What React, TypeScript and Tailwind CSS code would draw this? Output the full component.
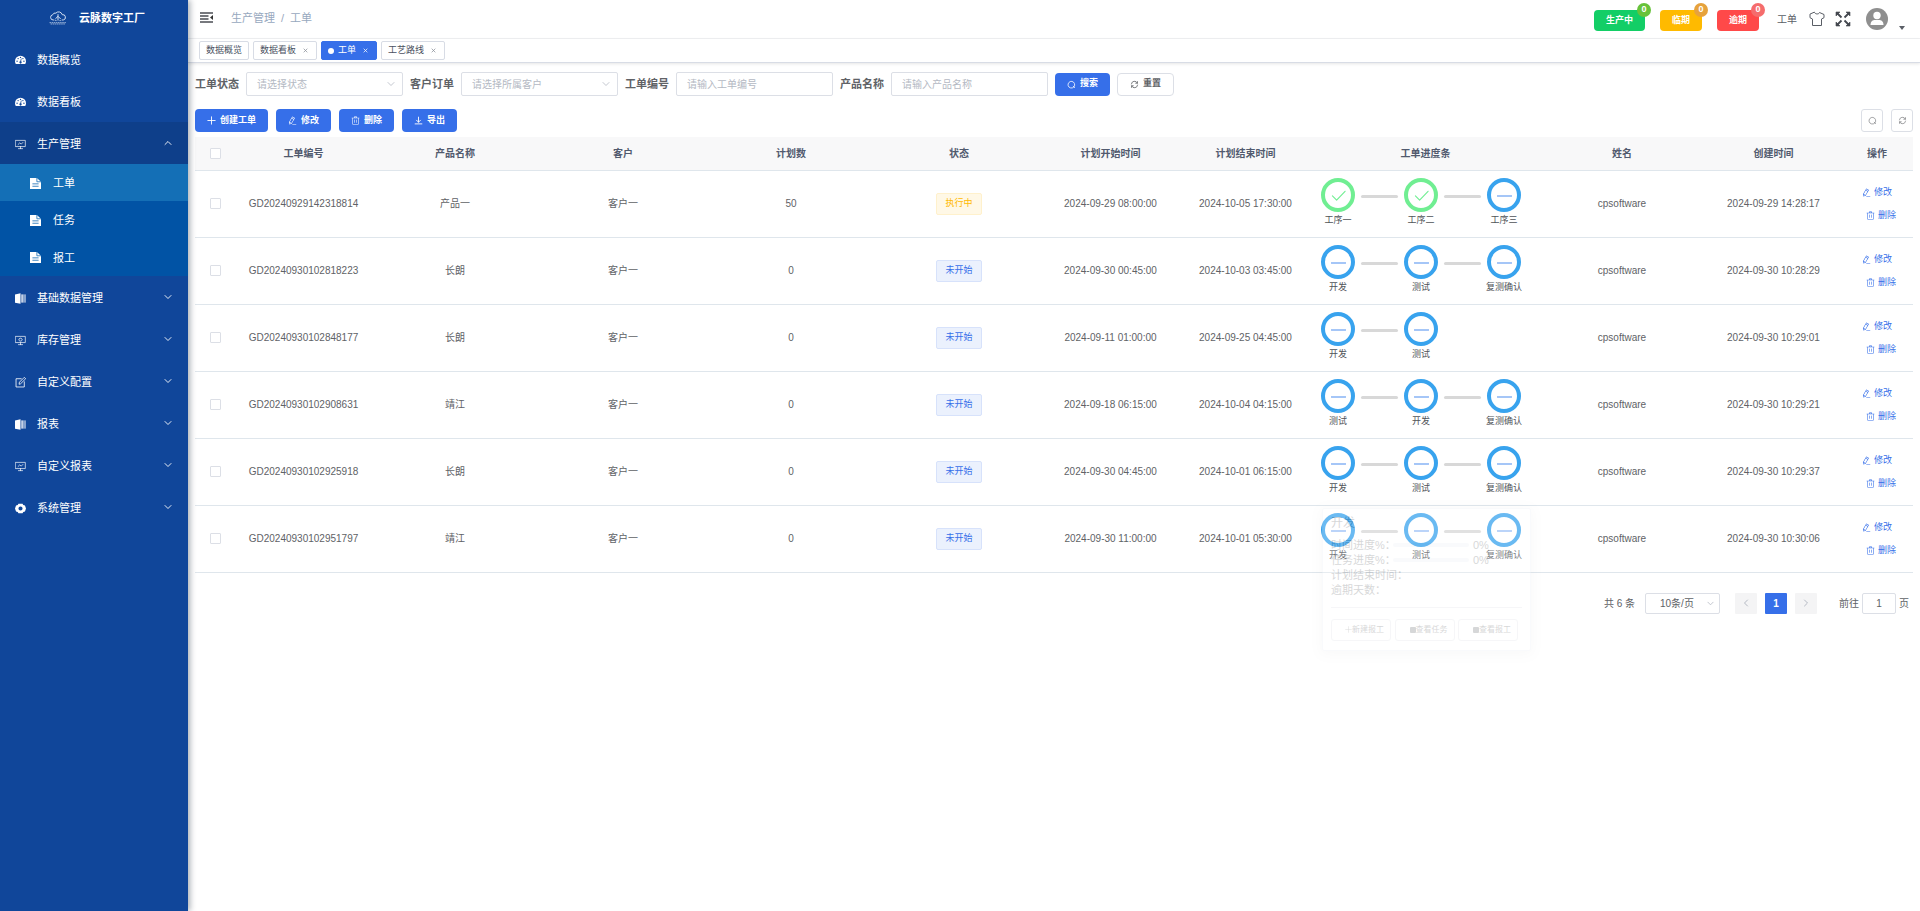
import type { ReactNode } from "react";
import clsx from "clsx";

type IconProps = { className?: string };

function Glyph({ className, d }: IconProps & { d: string }) {
  return (
    <svg viewBox="0 0 1024 1024" fill="currentColor" className={clsx("shrink-0", className)} aria-hidden="true">
      <path d={d} />
    </svg>
  );
}

function Line({ className, d, width = 1 }: IconProps & { d: string; width?: number }) {
  return (
    <svg
      viewBox="0 0 16 16"
      fill="none"
      stroke="currentColor"
      strokeWidth={width}
      strokeLinecap="round"
      strokeLinejoin="round"
      className={clsx("shrink-0", className)}
      aria-hidden="true"
    >
      <path d={d} />
    </svg>
  );
}

const EDIT =
  "m199.04 672.64 193.984 112 224-387.968-193.92-112-224 388.032zm-23.872 60.16 32.896 148.288 144.896-45.696zM455.04 229.248l193.92 112 56.704-98.112-193.984-112zM104.32 708.8l384-665.024 304.768 175.936L409.152 884.8h.064l-248.448 78.336zm384 254.272v-64h448v64z";
const TRASH =
  "M160 256H96a32 32 0 0 1 0-64h256V95.936a32 32 0 0 1 32-32h256a32 32 0 0 1 32 32V192h256a32 32 0 1 1 0 64h-64v672a32 32 0 0 1-32 32H192a32 32 0 0 1-32-32zm448-64v-64H416v64zM224 896h576V256H224zm192-128a32 32 0 0 1-32-32V416a32 32 0 0 1 64 0v320a32 32 0 0 1-32 32m192 0a32 32 0 0 1-32-32V416a32 32 0 0 1 64 0v320a32 32 0 0 1-32 32";
const SEARCH = "M11.5 13.2A6 6 0 1 1 13 11.5M11 11l2.5 2.5";
const REFRESH = "M2.5 7A5.5 5.5 0 0 1 13 5.5M13.2 2.8V5.8H10.2M13.5 9A5.5 5.5 0 0 1 3 10.5M2.8 13.2V10.2H5.8";
const PLUS = "M8 1.5v13M1.5 8h13";
const DOWNLOAD = "M8 2v9M4.5 7.5 8 11l3.5-3.5M2 14h12";
const DOWN = "m2 5 6 6 6-6";
const UP = "m2 11 6-6 6 6";

function GaugeIcon() {
  return (
    <svg viewBox="0 0 16 14" className="w-[11px] shrink-0" aria-hidden="true">
      <path d="M8 1a8 8 0 0 0-8 8c0 1.600.4 3 1.200 4h13.600c.8-1 1.200-2.400 1.200-4a8 8 0 0 0-8-8z" fill="#fff" />
      <g fill="#10469a">
        <circle cx="3" cy="9" r="1" />
        <circle cx="4.500" cy="5.200" r="1" />
        <circle cx="8" cy="3.500" r="1" />
        <circle cx="11.500" cy="5.200" r="1" />
        <circle cx="13" cy="9" r="1" />
        <path d="m8.600 5 1 .2-.7 4a1.700 1.700 0 1 1-1.200-.2z" />
      </g>
    </svg>
  );
}

function BoardIcon() {
  return <Line className="w-[11px]" d="M1 2h14v9H1zM8 11v3M5 14h6M4.500 8 7 5.500l2 2L11.500 5" />;
}

function StockIcon() {
  return <Line className="w-[11px]" d="M1 2h14v9H1zM8 11v3M5 14h6M5.500 7a2.500 2.500 0 0 1 4.500-1.500M10.500 6.500A2.500 2.500 0 0 1 6 8" />;
}

function BookIcon() {
  return (
    <svg viewBox="0 0 16 16" className="w-[11px] shrink-0" aria-hidden="true">
      <path d="M0 2 8 .5v15L0 14z" fill="#fff" />
      <path d="M9 2h3v12H9z" fill="#fff" opacity=".75" />
      <path d="M12 2h4v12h-4z" fill="#fff" opacity=".5" />
    </svg>
  );
}

function NoteIcon() {
  return <Line className="w-[11px]" d="M9 2.500H1.500v12h12V7M6 10l.5-2.500 7-7 2 2-7 7z" width={1.2} />;
}

function GearIcon() {
  return (
    <svg viewBox="0 0 16 16" className="w-[11px] shrink-0" aria-hidden="true">
      <path
        fill="#fff"
        fillRule="evenodd"
        d="M5 1h6l1 2 2.500.5L16 8l-1.500 4.500L12 13l-1 2H5l-1-2-2.500-.5L0 8l1.500-4.500L4 3zm3 4a3 3 0 1 0 0 6 3 3 0 0 0 0-6z"
      />
    </svg>
  );
}

function DocIcon() {
  return (
    <svg viewBox="0 0 16 16" className="w-[11px] shrink-0" aria-hidden="true">
      <path d="M0 0h10l6 5.500V16H0z" fill="#fff" />
      <path d="M10 0v5.500h6M3.500 8.500h9M3.500 12h9" stroke="#1a6fb5" strokeWidth="1.200" fill="none" />
    </svg>
  );
}

function CloudLogo() {
  return (
    <svg viewBox="0 0 34 26" className="w-[18px] shrink-0" fill="none" stroke="#dbe6f6" strokeWidth="1.800" aria-hidden="true">
      <path d="M10 17H8a5 5 0 0 1-1-9.900 5 5 0 0 1 6-3.100 7 7 0 0 1 12 3 5 5 0 0 1 2 10h-3" />
      <path d="M17 6v12M17 10l-5 5M17 10l5 5M13 17v2M21 17v2" />
      <path d="M1 22h32M3 24.500h28" strokeDasharray="3 1" opacity=".7" />
    </svg>
  );
}

function MenuItem({ icon, label, state }: { icon: ReactNode; label: string; state?: "open" | "closed" }) {
  return (
    <a
      href="#"
      className={clsx("flex h-[42px] items-center pt-[2px] pr-4 pl-[15px] text-white", state === "open" && "bg-[#0e3f8a]")}
    >
      <span className="flex w-[22px] items-center">{icon}</span>
      <span className="flex-1">{label}</span>
      {state && <Line className="mb-[2px] w-2" d={state === "open" ? UP : DOWN} width={1.8} />}
    </a>
  );
}

function Sidebar() {
  return (
    <aside className="z-10 w-[188px] shrink-0 bg-[#10469a] text-[11px] shadow-[2px_0_6px_rgba(0,21,41,0.35)]">
      <div className="flex h-[38px] items-center gap-3 pb-[2px] pl-[49px] font-bold text-white">
        <CloudLogo />
        <h1>云脉数字工厂</h1>
      </div>
      <nav>
        <MenuItem icon={<GaugeIcon />} label="数据概览" />
        <MenuItem icon={<GaugeIcon />} label="数据看板" />
        <MenuItem icon={<BoardIcon />} label="生产管理" state="open" />
        <div className="grid h-[112px] grid-rows-3 bg-[#0153a5] text-white">
          {["工单", "任务", "报工"].map((label, i) => (
            <a key={label} href="#" className={clsx("flex items-center gap-3 pt-px pl-[30px]", i === 0 && "bg-[#146fb6]")}>
              <DocIcon />
              {label}
            </a>
          ))}
        </div>
        <MenuItem icon={<BookIcon />} label="基础数据管理" state="closed" />
        <MenuItem icon={<StockIcon />} label="库存管理" state="closed" />
        <MenuItem icon={<NoteIcon />} label="自定义配置" state="closed" />
        <MenuItem icon={<BookIcon />} label="报表" state="closed" />
        <MenuItem icon={<BoardIcon />} label="自定义报表" state="closed" />
        <MenuItem icon={<GearIcon />} label="系统管理" state="closed" />
      </nav>
    </aside>
  );
}

function CountButton({ label, color, dot }: { label: string; color: string; dot: string }) {
  return (
    <button type="button" className={clsx("relative h-[21px] rounded px-3 text-[9px] font-bold text-white", color)}>
      {label}
      <span
        className={clsx(
          "absolute -top-[7px] -right-[6px] flex size-[14px] items-center justify-center rounded-full text-[9px] font-bold",
          dot,
        )}
      >
        0
      </span>
    </button>
  );
}

function Navbar() {
  return (
    <header className="flex h-[39px] items-center border-b border-[#f0f1f3] pr-[15px] pl-3 text-[#5a5e66]">
      <button type="button" aria-label="收起菜单" className="mb-[3px]">
        <svg viewBox="0 0 13 11" className="w-[13px]" aria-hidden="true">
          <path d="M0 1h13M0 4h8.500M0 7h8.500M0 10h13" stroke="#4b4e54" strokeWidth="1.400" />
          <path d="M13 3v5l-3-2.500z" fill="#333" />
        </svg>
      </button>
      <nav className="mb-px ml-[18px] flex gap-[6px] text-[11px] text-[#97a8be]">
        <a href="#">生产管理</a>
        <span>/</span>
        <a href="#">工单</a>
      </nav>
      <div className="ml-auto flex items-center">
        <div className="mt-[3px] flex gap-[15px]">
          <CountButton label="生产中" color="bg-[#13ce66]" dot="bg-[#67c23a]" />
          <CountButton label="临期" color="bg-[#ffba00]" dot="bg-[#e6a23c]" />
          <CountButton label="逾期" color="bg-[#ff4949]" dot="bg-[#f56c6c]" />
        </div>
        <a href="#" className="ml-[18px] text-[10px]">
          工单
        </a>
        <button type="button" aria-label="布局大小" className="ml-3">
          <Line
            className="w-4"
            d="M5.500 1.500C6 3.500 10 3.500 10.500 1.500L15 3.500v3.200L12.500 8v6.500h-9V8L1 6.700V3.500z"
          />
        </button>
        <button type="button" aria-label="全屏" className="ml-[10px]">
          <svg viewBox="0 0 16 16" className="w-4" fill="#44484f" stroke="#44484f" strokeWidth="1.800" aria-hidden="true">
            <path d="M1 5V1h4zM11 1h4v4zM1 11v4h4zM15 11v4h-4z" strokeWidth=".6" />
            <path d="m2 2 4.500 4.500M14 2 9.500 6.500M2 14l4.500-4.500M14 14 9.500 9.500" />
          </svg>
        </button>
        <button type="button" aria-label="用户" className="ml-[15px] flex items-end gap-[11px]">
          <svg viewBox="0 0 22 22" className="w-[22px]" aria-hidden="true">
            <circle cx="11" cy="11" r="11" fill="#8f8f8f" />
            <circle cx="11" cy="7.500" r="3.700" fill="#fff" />
            <path d="M4.500 17c0-4 2.500-5 4.500-5h4c2 0 4.500 1 4.500 5z" fill="#fff" />
          </svg>
          <svg viewBox="0 0 6 4" className="w-[6px]" aria-hidden="true">
            <path d="M0 0h6L3 4z" fill="#5a5e66" />
          </svg>
        </button>
      </div>
    </header>
  );
}

const TABS = [
  { label: "数据概览", closable: false },
  { label: "数据看板", closable: true },
  { label: "工单", closable: true, active: true },
  { label: "工艺路线", closable: true },
];

function TabsBar() {
  return (
    <div className="flex h-6 items-center gap-1 border-b border-[#d8dce5] pl-[11px] shadow-[0_1px_3px_rgba(0,0,0,0.1)]">
      {TABS.map((tab) => (
        <a
          key={tab.label}
          href="#"
          className={clsx(
            "flex h-[19px] items-center rounded-xs border px-[6px] text-[9px]",
            tab.active ? "border-[#366fe9] bg-[#366fe9] text-white" : "border-[#d8dce5] bg-white text-[#495060]",
          )}
        >
          {tab.active && <span className="mr-1 size-[6px] rounded-full bg-white" />}
          {tab.label}
          {tab.closable && (
            <Line className={clsx("mr-[2px] ml-[7px] w-[5px]", !tab.active && "text-[#8b909a]")} d="m3 3 10 10M13 3 3 13" width={2.4} />
          )}
        </a>
      ))}
    </div>
  );
}

const FIELD = "h-6 w-[157px] rounded-xs border border-[#dcdfe6] bg-white px-[10px] text-[10px] text-[#606266] placeholder:text-[#b4b9c3]";

function SelectField({ id, label, placeholder }: { id: string; label: string; placeholder: string }) {
  return (
    <div className="flex items-center gap-[7px]">
      <label htmlFor={id}>{label}</label>
      <div className="relative">
        <select id={id} className={clsx(FIELD, "block appearance-none font-normal text-[#b4b9c3]")}>
          <option>{placeholder}</option>
        </select>
        <Line className="pointer-events-none absolute top-2 right-2 w-2 text-[#b4b9c3]" d={DOWN} width={1.6} />
      </div>
    </div>
  );
}

function TextField({ id, label, placeholder }: { id: string; label: string; placeholder: string }) {
  return (
    <div className="flex items-center gap-[7px]">
      <label htmlFor={id}>{label}</label>
      <input id={id} type="text" placeholder={placeholder} className={clsx(FIELD, "font-normal")} />
    </div>
  );
}

const BUTTON = "flex h-[23px] items-center justify-center gap-1 rounded px-3 text-[9px] font-bold";
const PRIMARY = "bg-[#366fe9] text-white";

function Filters() {
  return (
    <form className="flex flex-wrap items-center gap-[7px] text-[11px] font-bold text-[#606266]">
      <SelectField id="status" label="工单状态" placeholder="请选择状态" />
      <SelectField id="customer" label="客户订单" placeholder="请选择所属客户" />
      <TextField id="code" label="工单编号" placeholder="请输入工单编号" />
      <TextField id="product" label="产品名称" placeholder="请输入产品名称" />
      <button type="button" className={clsx(BUTTON, PRIMARY)}>
        <Line className="w-[9px]" d={SEARCH} width={1.4} />
        搜索
      </button>
      <button type="button" className={clsx(BUTTON, "border border-[#dcdfe6] bg-white")}>
        <Line className="w-[9px]" d={REFRESH} width={1.4} />
        重置
      </button>
    </form>
  );
}

function Toolbar() {
  const tool = "flex h-[23px] w-[22px] items-center justify-center rounded-[3px] border border-[#dcdfe6] text-[#606266]";
  return (
    <div className="mt-[13px] flex gap-2">
      <button type="button" className={clsx(BUTTON, PRIMARY)}>
        <Line className="w-[9px]" d={PLUS} width={1.6} />
        创建工单
      </button>
      <button type="button" className={clsx(BUTTON, PRIMARY)}>
        <Glyph className="w-[9px]" d={EDIT} />
        修改
      </button>
      <button type="button" className={clsx(BUTTON, PRIMARY)}>
        <Glyph className="w-[9px]" d={TRASH} />
        删除
      </button>
      <button type="button" className={clsx(BUTTON, PRIMARY)}>
        <Line className="w-[9px]" d={DOWNLOAD} width={1.6} />
        导出
      </button>
      <button type="button" aria-label="显示搜索" className={clsx(tool, "ml-auto")}>
        <Line className="w-[9px]" d={SEARCH} />
      </button>
      <button type="button" aria-label="刷新" className={tool}>
        <Line className="w-[9px]" d={REFRESH} />
      </button>
    </div>
  );
}

type Step = { name: string; done?: boolean };
type Order = {
  code: string;
  product: string;
  count: number;
  running?: boolean;
  start: string;
  end: string;
  steps: Step[];
  created: string;
};

const DEV_FIRST: Step[] = [{ name: "开发" }, { name: "测试" }, { name: "复测确认" }];
const TEST_FIRST: Step[] = [{ name: "测试" }, { name: "开发" }, { name: "复测确认" }];

const ORDERS: Order[] = [
  {
    code: "GD20240929142318814",
    product: "产品一",
    count: 50,
    running: true,
    start: "2024-09-29 08:00:00",
    end: "2024-10-05 17:30:00",
    steps: [{ name: "工序一", done: true }, { name: "工序二", done: true }, { name: "工序三" }],
    created: "2024-09-29 14:28:17",
  },
  {
    code: "GD20240930102818223",
    product: "长朗",
    count: 0,
    start: "2024-09-30 00:45:00",
    end: "2024-10-03 03:45:00",
    steps: DEV_FIRST,
    created: "2024-09-30 10:28:29",
  },
  {
    code: "GD20240930102848177",
    product: "长朗",
    count: 0,
    start: "2024-09-11 01:00:00",
    end: "2024-09-25 04:45:00",
    steps: DEV_FIRST.slice(0, 2),
    created: "2024-09-30 10:29:01",
  },
  {
    code: "GD20240930102908631",
    product: "靖江",
    count: 0,
    start: "2024-09-18 06:15:00",
    end: "2024-10-04 04:15:00",
    steps: TEST_FIRST,
    created: "2024-09-30 10:29:21",
  },
  {
    code: "GD20240930102925918",
    product: "长朗",
    count: 0,
    start: "2024-09-30 04:45:00",
    end: "2024-10-01 06:15:00",
    steps: DEV_FIRST,
    created: "2024-09-30 10:29:37",
  },
  {
    code: "GD20240930102951797",
    product: "靖江",
    count: 0,
    start: "2024-09-30 11:00:00",
    end: "2024-10-01 05:30:00",
    steps: DEV_FIRST,
    created: "2024-09-30 10:30:06",
  },
];

function Steps({ steps }: { steps: Step[] }) {
  return (
    <ol className="flex pl-2">
      {steps.map((step, i) => (
        <li key={step.name} className="flex">
          {i > 0 && <span className="mx-[6px] mt-[17px] h-[3px] w-[37px] rounded-full bg-[#d8d8d8]" />}
          <span className="flex w-[34px] flex-col items-center">
            <span
              className={clsx(
                "flex size-[34px] items-center justify-center rounded-full border-4",
                step.done ? "border-[#70ee92] text-[#70ee92]" : "border-[#38a3ee] text-[#4c8df0]",
              )}
            >
              <Line className="w-[15px]" d={step.done ? "m1.500 8.500 4.500 4.500L15 3.500" : "M.5 8.500h15"} width={1.2} />
            </span>
            <span className="mt-[2px] text-[9px] leading-3 whitespace-nowrap text-[#505358]">{step.name}</span>
          </span>
        </li>
      ))}
    </ol>
  );
}

// Shown half way through its fade, under the first step of the last order.
function StepPopover() {
  const action = "flex h-[22px] w-[60px] items-center justify-end rounded-[3px] border border-[#dcdfe6] pr-[6px] text-[8px]";
  return (
    <div className="absolute top-[2px] left-[9px] z-10 h-[143px] w-[209px] rounded-xs border border-[#ebeef5] bg-white px-2 text-left text-[11px] text-[#606266] opacity-25 shadow-[0_2px_12px_rgba(0,0,0,0.1)]">
      <h2 className="mt-[6px] mb-[7px] text-[12px] leading-4">开发</h2>
      {["时间进度%：", "任务进度%："].map((label) => (
        <div key={label} className="flex h-[15px] items-center">
          <span className="w-[62px] whitespace-nowrap">{label}</span>
          <span className="h-1 w-[76px] rounded-full bg-[#ebeef5]" />
          <span className="ml-1">0%</span>
        </div>
      ))}
      <p className="leading-[15px]">计划结束时间：</p>
      <p className="leading-[14px]">逾期天数：</p>
      <hr className="mt-[10px] mb-[11px] border-[#dcdfe6]" />
      <div className="flex justify-between pr-1">
        <button type="button" className={action}>
          <Line className="w-[7px]" d={PLUS} />
          新建报工
        </button>
        <button type="button" className={action}>
          <span className="size-[6px] rounded-[1px] bg-[#606266]" />
          查看任务
        </button>
        <button type="button" className={action}>
          <span className="size-[6px] rounded-[1px] bg-[#606266]" />
          查看报工
        </button>
      </div>
    </div>
  );
}

function Checkbox({ label }: { label: string }) {
  return (
    <input
      type="checkbox"
      aria-label={label}
      className="mx-auto block size-[11px] appearance-none rounded-[1px] border border-[#dcdfe6] bg-white"
    />
  );
}

const COLUMNS = [
  { label: "工单编号", width: "w-[135px]" },
  { label: "产品名称" },
  { label: "客户" },
  { label: "计划数" },
  { label: "状态" },
  { label: "计划开始时间", width: "w-[135px]" },
  { label: "计划结束时间", width: "w-[135px]" },
  { label: "工单进度条", width: "w-[225px]" },
  { label: "姓名" },
  { label: "创建时间", width: "w-[135px]" },
  { label: "操作", width: "w-[72px]" },
];

function OrderTable() {
  return (
    <table className="mt-[5px] w-full table-fixed text-center text-[10px] text-[#606266]">
      <thead>
        <tr className="h-[33px] border-b border-[#dfe6ec] bg-[#f8f8f9] text-[#515a6e]">
          <th className="w-[41px]">
            <Checkbox label="全选" />
          </th>
          {COLUMNS.map((col) => (
            <th key={col.label} className={clsx("font-bold", col.width)}>
              {col.label}
            </th>
          ))}
        </tr>
      </thead>
      <tbody>
        {ORDERS.map((order, i) => (
          <tr key={order.code} className="h-[67px] border-b border-[#dfe6ec]">
            <td>
              <Checkbox label={order.code} />
            </td>
            <td>{order.code}</td>
            <td>{order.product}</td>
            <td>客户一</td>
            <td>{order.count}</td>
            <td>
              <span
                className={clsx(
                  "inline-flex h-[22px] items-center rounded-xs border px-2 text-[9px]",
                  order.running ? "border-[#fff1cc] bg-[#fff8e6] text-[#ffba00]" : "border-[#d7e2fb] bg-[#ebf1fd] text-[#366fe9]",
                )}
              >
                {order.running ? "执行中" : "未开始"}
              </span>
            </td>
            <td>{order.start}</td>
            <td>{order.end}</td>
            <td className="relative pb-[3px]">
              <Steps steps={order.steps} />
              {i === ORDERS.length - 1 && <StepPopover />}
            </td>
            <td>cpsoftware</td>
            <td>{order.created}</td>
            <td className="text-[9px] text-[#366fe9]">
              <div className="flex flex-col gap-[10px] pl-[21px]">
                <button type="button" className="flex items-center gap-[3px] leading-[13px]">
                  <Glyph className="w-[9px]" d={EDIT} />
                  修改
                </button>
                <button type="button" className="ml-1 flex items-center gap-[3px] leading-[13px]">
                  <Glyph className="w-[9px]" d={TRASH} />
                  删除
                </button>
              </div>
            </td>
          </tr>
        ))}
      </tbody>
    </table>
  );
}

function Pagination() {
  const arrow = "flex h-[21px] w-[22px] items-center justify-center rounded-[1px] bg-[#f4f4f5] text-[#b4b9c3]";
  return (
    <div className="mt-5 flex items-center justify-end pr-1 text-[10px] text-[#606266]">
      <span>共 6 条</span>
      <div className="relative ml-[10px]">
        <select
          aria-label="每页条数"
          className="block h-[21px] w-[75px] appearance-none rounded-xs border border-[#dcdfe6] bg-white pl-[14px] text-[10px]"
        >
          <option>10条/页</option>
        </select>
        <Line className="pointer-events-none absolute top-[7px] right-[6px] w-[7px] text-[#b4b9c3]" d={DOWN} width={1.8} />
      </div>
      <button type="button" aria-label="上一页" className={clsx(arrow, "ml-[15px]")}>
        <Line className="w-2" d="m11 2-6 6 6 6" width={2} />
      </button>
      <button type="button" className="mx-2 h-[21px] w-[22px] rounded-[1px] bg-[#366fe9] font-bold text-white">
        1
      </button>
      <button type="button" aria-label="下一页" className={arrow}>
        <Line className="w-2" d="m5 2 6 6-6 6" width={2} />
      </button>
      <label className="ml-[22px] flex items-center gap-[3px]">
        前往
        <input
          type="text"
          defaultValue="1"
          className="h-[21px] w-[34px] rounded-xs border border-[#dcdfe6] text-center text-[10px]"
        />
        页
      </label>
    </div>
  );
}

export default function App() {
  return (
    <div className="flex min-h-screen bg-white font-['Liberation_Sans','Noto_Sans_CJK_SC',sans-serif]">
      <Sidebar />
      <div className="min-w-0 flex-1">
        <Navbar />
        <TabsBar />
        <main className="px-[7px] pt-[9px]">
          <Filters />
          <Toolbar />
          <OrderTable />
          <Pagination />
        </main>
      </div>
    </div>
  );
}
